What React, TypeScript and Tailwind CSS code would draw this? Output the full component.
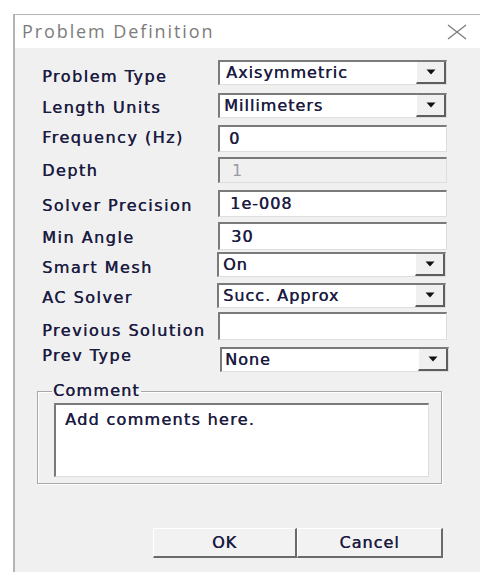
import React from "react";

type Field = {
  label: string;
  kind: "combo" | "text" | "disabled";
  value: string;
  row: string;
  ctrl: string;
  lab: string;
};

const fields: Field[] = [
  { label: "Problem Type", kind: "combo", value: "Axisymmetric", row: "h-[25px]", ctrl: "ml-0 pl-[6px]", lab: "mt-[8px]" },
  { label: "Length Units", kind: "combo", value: "Millimeters", row: "mt-[8px] h-[25px]", ctrl: "ml-0 pl-[4px]", lab: "mt-[6px]" },
  { label: "Frequency (Hz)", kind: "text", value: "0", row: "mt-[7px] h-[27px]", ctrl: "ml-0 pl-[9px]", lab: "mt-[4px]" },
  { label: "Depth", kind: "disabled", value: "1", row: "mt-[5px] h-[26px]", ctrl: "ml-0 pl-[12px]", lab: "mt-[5px]" },
  { label: "Solver Precision", kind: "text", value: "1e-008", row: "mt-[7px] h-[27px]", ctrl: "ml-0 pl-[10px]", lab: "mt-[7px]" },
  { label: "Min Angle", kind: "text", value: "30", row: "mt-[5px] h-[28px]", ctrl: "ml-0 pl-[11px]", lab: "mt-[7px]" },
  { label: "Smart Mesh", kind: "combo", value: "On", row: "mt-[2px] h-[25px]", ctrl: "-ml-[1px] pl-[4px]", lab: "mt-[7px]" },
  { label: "AC Solver", kind: "combo", value: "Succ. Approx", row: "mt-[6px] h-[25px]", ctrl: "-ml-[1px] pl-[4px]", lab: "mt-[6px]" },
  { label: "Previous Solution", kind: "text", value: "", row: "mt-[4px] h-[28px]", ctrl: "ml-0 pl-[8px]", lab: "mt-[10px]" },
  { label: "Prev Type", kind: "combo", value: "None", row: "mt-[7px] h-[25px]", ctrl: "ml-[2px] pl-[3px]", lab: "mt-0" },
];

const ink = "text-[#1c1c42] [text-shadow:0.45px_0_0_#1c1c42]";

function DropArrow() {
  return (
    <svg width="10" height="6" viewBox="0 0 10 6" aria-hidden="true">
      <path d="M0.5 0.5 H9.5 L5 5.5 Z" fill="#111" />
    </svg>
  );
}

function CloseGlyph() {
  return (
    <svg width="20" height="16" viewBox="0 0 20 16" aria-hidden="true">
      <path d="M1 1 L19 15 M19 1 L1 15" stroke="#7c7c7c" strokeWidth="1.3" fill="none" />
    </svg>
  );
}

const sunken =
  "border-t-2 border-l-2 border-t-[#7a7a7a] border-l-[#7a7a7a] border-r border-b border-r-[#dedede] border-b-[#dedede]";

function Control({ f }: { f: Field }) {
  if (f.kind === "combo") {
    return (
      <div className={`flex h-full w-[229px] bg-white ${sunken} ${f.ctrl}`}>
        <div className={`flex flex-1 items-center text-[16px] tracking-[1px] ${ink}`}>{f.value}</div>
        <div className="flex w-[30px] items-center justify-center border-l border-l-white border-b-2 border-r-2 border-b-[#5e5e5e] border-r-[#5e5e5e] bg-[#f0f0f0]">
          <DropArrow />
        </div>
      </div>
    );
  }
  const look =
    f.kind === "disabled"
      ? "bg-[#f0f0f0] text-[#9a9aa6]"
      : `bg-white ${ink}`;
  return (
    <div className={`flex h-full w-[229px] items-center text-[16px] tracking-[1px] ${sunken} ${look} ${f.ctrl}`}>
      {f.value}
    </div>
  );
}

export default function App() {
  return (
    <div className="h-[572px] w-[480px] overflow-hidden bg-white font-['DejaVu_Sans',sans-serif]">
      <div className="ml-[13px] mt-[14px] h-[600px] w-[467px] border-l-2 border-t border-l-[#b4b4b4] border-t-[#b4b4b4]">
        {/* title bar */}
        <div className="flex h-[33px] items-center justify-between bg-white pl-[7px] pr-[13px]">
          <span className="font-['Open_Sans',sans-serif] text-[18px] tracking-[1.9px] text-[#7c7c7c]">
            Problem Definition
          </span>
          <CloseGlyph />
        </div>

        {/* client area */}
        <div className="h-full bg-[#f0f0f0] pl-[27px] pt-[12px]">
          {fields.map((f) => (
            <div key={f.label} className={`flex items-start ${f.row}`}>
              <div className={`w-[176px] text-[16px] leading-[18px] tracking-[1.5px] ${ink} ${f.lab}`}>{f.label}</div>
              <Control f={f} />
            </div>
          ))}

          {/* comment group */}
          <fieldset className="ml-[-5px] mt-[7px] h-[105px] w-[405px] border border-[#a8a8a8] pl-[16px] pr-[12px] shadow-[inset_1px_1px_0_#fff,1px_1px_0_#fff]">
            <legend className={`-ml-[2px] px-[1px] text-[16px] tracking-[1.2px] ${ink}`}>Comment</legend>
            <div className={`h-[74px] w-[375px] ${sunken} bg-white pl-[9px] pt-[3px] text-[16px] tracking-[1.3px] ${ink}`}>
              Add comments here.
            </div>
          </fieldset>

          {/* buttons */}
          <div className="ml-[111px] mt-[44px] flex h-[30px]">
            <div className={`flex w-[144px] items-center justify-center border-t border-l border-t-white border-l-white border-b-2 border-r-2 border-b-[#6a6a6a] border-r-[#6a6a6a] bg-[#f2f2f2] text-[16px] tracking-[1px] ${ink}`}>
              OK
            </div>
            <div className={`flex w-[146px] items-center justify-center border-t border-l border-t-white border-l-white border-b-2 border-r-2 border-b-[#6a6a6a] border-r-[#6a6a6a] bg-[#f2f2f2] text-[16px] tracking-[1px] ${ink}`}>
              Cancel
            </div>
          </div>
        </div>
      </div>
    </div>
  );
}
